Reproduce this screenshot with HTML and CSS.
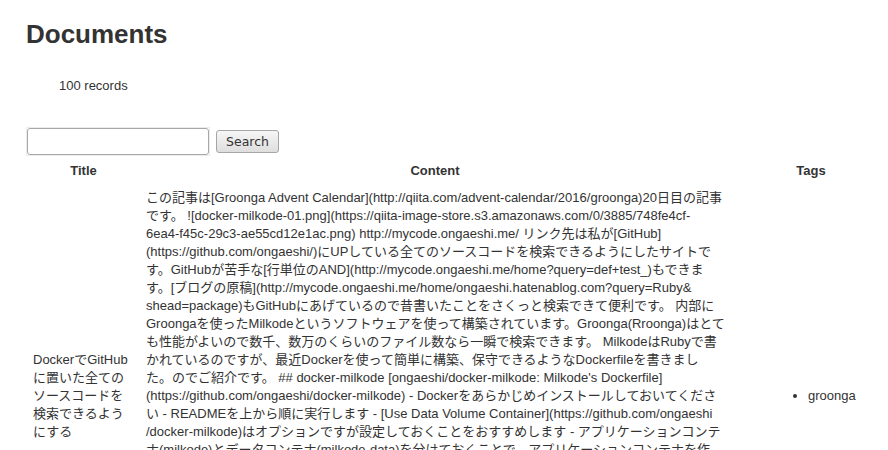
FILE: index.html
```html
<!DOCTYPE html>
<html lang="ja">
<head>
<meta charset="utf-8">
<title>Documents</title>
<link rel="stylesheet" href="styles.css">
</head>
<body>
<div class="page">
  <h1 class="heading">Documents</h1>
  <p class="count">100 records</p>
  <form class="search">
    <span class="field"><input class="query" type="text"></span>
    <button class="submit" type="button">Search</button>
  </form>
  <table class="docs">
    <colgroup>
      <col class="col-title">
      <col class="col-content">
      <col class="col-tags">
    </colgroup>
    <thead>
      <tr>
        <th class="th-title">Title</th>
        <th class="th-content">Content</th>
        <th class="th-tags">Tags</th>
      </tr>
    </thead>
    <tbody>
      <tr>
        <td class="td-title">DockerでGitHubに置いた全てのソースコードを検索できるようにする</td>
        <td class="td-content">この記事は[Groonga Advent Calendar](http://qiita.com/advent-calendar/2016/groonga)20日目の記事<br>です。 ![docker-milkode-01.png](https://qiita-image-store.s3.amazonaws.com/0/3885/748fe4cf-<br>6ea4-f45c-29c3-ae55cd12e1ac.png) http://mycode.ongaeshi.me/ リンク先は私が[GitHub]<br>(https://github.com/ongaeshi/)にUPしている全てのソースコードを検索できるようにしたサイトで<br>す。GitHubが苦手な[行単位のAND](http://mycode.ongaeshi.me/home?query=def+test_)もできま<br>す。[ブログの原稿](http://mycode.ongaeshi.me/home/ongaeshi.hatenablog.com?query=Ruby&amp;<br>shead=package)もGitHubにあげているので昔書いたことをさくっと検索できて便利です。 内部に<br>Groongaを使ったMilkodeというソフトウェアを使って構築されています。Groonga(Rroonga)はとて<br>も性能がよいので数千、数万のくらいのファイル数なら一瞬で検索できます。 MilkodeはRubyで書<br>かれているのですが、最近Dockerを使って簡単に構築、保守できるようなDockerfileを書きまし<br>た。のでご紹介です。 ## docker-milkode [ongaeshi/docker-milkode: Milkode's Dockerfile]<br>(https://github.com/ongaeshi/docker-milkode) - Dockerをあらかじめインストールしておいてくださ<br>い - READMEを上から順に実行します - [Use Data Volume Container](https://github.com/ongaeshi<br>/docker-milkode)はオプションですが設定しておくことをおすすめします - アプリケーションコンテ<br>ナ(milkode)とデータコンテナ(milkode-data)を分けておくことで、アプリケーションコンテナを作<br>り直してもデータが消えないようになります。 ## 使い方 ```shell # データコンテナを作成<br>$ docker run --name milkode-data ongaeshi/docker-milkode echo "Data-only container"<br># アプリケーションコンテナを起動 $ docker run -d --volumes-from milkode-data<br>-p 80:9292 ongaeshi/docker-milkode ``` ブラウザで http://localhost/ を開くと表示されます。<br>## パッケージの追加 ```shell $ docker exec milkode milk add https://github.com<br>/groonga/groonga.git ``` 追加したパッケージはすぐに検索できるようになります。 ## まとめ<br>Dockerを使うとMilkodeの環境構築がとても簡単になります。Groongaの高速な全文検索<br>を手軽に試せるので、ぜひ使ってみてください。</td>
        <td class="td-tags">
          <ul class="tags">
            <li>groonga</li>
          </ul>
        </td>
      </tr>
    </tbody>
  </table>
</div>
</body>
</html>
```
FILE: styles.css
```css
html, body {
  margin: 0;
  padding: 0;
  background: #ffffff;
}

body {
  font-family: "Liberation Sans", "Noto Sans CJK JP", sans-serif;
  font-size: 13px;
  line-height: 18px;
  color: #333333;
}

.page {
  padding: 0 26px;
}

.heading {
  margin: 16px 0 0;
  font-size: 26px;
  line-height: 36px;
  font-weight: bold;
  color: #333333;
}

.count {
  margin: 25px 0 0 33px;
}

.search {
  display: flex;
  align-items: center;
  gap: 6px;
  margin: 32px 0 6px;
  height: 29px;
}

.field {
  display: block;
  box-sizing: border-box;
  width: 184px;
  height: 29px;
  border: 1px solid #ececec;
}

.query {
  display: block;
  box-sizing: border-box;
  width: 182px;
  height: 27px;
  margin: 0;
  padding: 2px 4px;
  border: 1px solid #a8a8a8;
  border-radius: 3px;
  background: #ffffff;
  font: 13px "Liberation Sans", sans-serif;
  outline: none;
}

.submit {
  box-sizing: border-box;
  width: 63px;
  height: 23px;
  margin: 0;
  padding: 0;
  border: 1px solid #a6a6a6;
  border-radius: 3px;
  background: linear-gradient(#f6f6f6, #dedede);
  font-family: "DejaVu Sans", sans-serif;
  font-size: 12.5px;
  line-height: 20px;
  color: #333333;
  text-align: center;
}

.docs {
  table-layout: fixed;
  width: 862px;
  border-collapse: collapse;
  border-spacing: 0;
}

.col-title { width: 114px; }
.col-content { width: 590px; }
.col-tags { width: 158px; }

.docs th {
  padding: 0 6px;
  font-weight: bold;
  text-align: center;
  line-height: 18px;
}

.docs th.th-title {
  padding-left: 7px;
}

.docs th.th-tags {
  padding: 0 0 0 4px;
}

.docs td {
  padding: 9px 6px 0;
  vertical-align: middle;
  text-align: left;
}

.docs td.td-title {
  padding-left: 7px;
}

.docs td.td-content {
  padding-right: 2px;
  white-space: nowrap;
}

.docs td.td-tags {
  padding: 9px 0 0 6px;
}

.tags {
  margin: 0;
  padding: 0 0 0 72px;
  list-style: disc;
}
```
